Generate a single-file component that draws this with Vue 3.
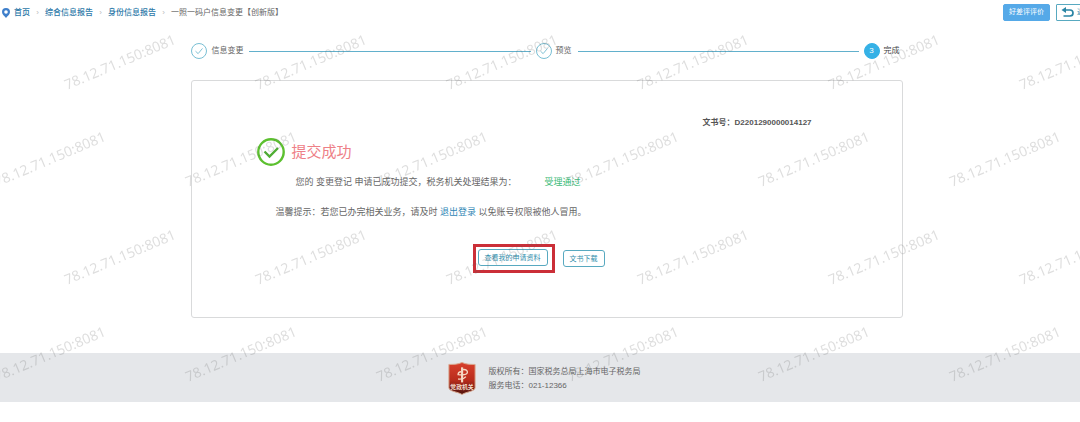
<script setup>
import { ref } from 'vue'

const crumbs = ref(['首页', '综合信息报告', '身份信息报告'])

const steps = ref([
  { title: '信息变更', done: true },
  { title: '预览', done: true },
  { title: '完成', done: false },
])

const watermark = '78.12.71.150:8081'
</script>

<template>
  <div class="page">
    <header class="topbar">
      <nav class="crumbs">
        <svg class="pin" viewBox="0 0 16 20">
          <path d="M8 0a8 8 0 0 0-8 8c0 5 5 8 8 12 3-4 8-7 8-12a8 8 0 0 0-8-8z" fill="#3f7fcb" />
          <circle cx="8" cy="8" r="3.6" fill="#fff" />
        </svg>
        <template v-for="item in crumbs" :key="item">
          <a href="#">{{ item }}</a>
          <span class="sep">›</span>
        </template>
        <span class="current">一照一码户信息变更【创新版】</span>
      </nav>
      <div class="tools">
        <button type="button" class="rate">好差评评价</button>
        <button type="button" class="back">
          <svg viewBox="0 0 28 22">
            <path d="M9 6h9a6 6 0 0 1 0 12H5" fill="none" stroke="#2b85a5" stroke-width="3.4" />
            <path d="M10 0v12L1 6z" fill="#2b85a5" />
          </svg>
          <span>返回</span>
        </button>
      </div>
    </header>

    <main class="main">
      <ol class="steps">
        <li v-for="(step, i) in steps" :key="step.title" :class="{ active: !step.done }">
          <span class="dot">
            <svg v-if="step.done" viewBox="0 0 16 16">
              <path d="M4 8.2l3 2.8 5-6" fill="none" stroke="#6fb9cf" stroke-width="1" />
            </svg>
            <template v-else>{{ i + 1 }}</template>
          </span>
          <span>{{ step.title }}</span>
          <i v-if="i < steps.length - 1" class="line" />
        </li>
      </ol>

      <section class="card">
        <p class="doc-no">文书号：D2201290000014127</p>
        <div class="result">
          <svg class="ok" viewBox="0 0 28 28">
            <circle cx="14" cy="14" r="12.7" fill="#fff" stroke="#5cc02f" stroke-width="2.4" />
            <path d="M7.5 13.5l5 5 8.5-8.5" fill="none" stroke="#4fae33" stroke-width="2.4" />
          </svg>
          <h1>提交成功</h1>
        </div>
        <p class="status">
          <span>您的 变更登记 申请已成功提交，税务机关处理结果为：</span>
          <span class="pass">受理通过</span>
        </p>
        <p class="tip">温馨提示：若您已办完相关业务，请及时 <a href="#">退出登录</a> 以免账号权限被他人冒用。</p>
        <div class="actions">
          <span class="highlight">
            <button type="button">查看我的申请资料</button>
          </span>
          <button type="button">文书下载</button>
        </div>
      </section>
    </main>

    <footer class="footer">
      <svg class="badge" viewBox="0 0 28 34">
        <defs>
          <linearGradient id="shield" x1="0" y1="0" x2="0" y2="1">
            <stop offset="0" stop-color="#d8402c" />
            <stop offset="0.55" stop-color="#b92c1c" />
            <stop offset="1" stop-color="#4e120c" />
          </linearGradient>
        </defs>
        <path d="M14 .5c4 2 9 2 13.500 2v24c0 4-9 4-13.500 7C9.500 30.500.5 30.500.5 26.500v-24c4.500 0 9.500 0 13.500-2z" fill="url(#shield)" stroke="#d9a88f" stroke-width="1" />
        <path d="M13 5.500h2.200V21H13z" fill="#f6d9c4" />
        <path d="M14 8c4-1 6 1 5.500 3-.5 2-5 2.500-9.500 2 0-2 1.500-3 3-3M10 17.500c3 .5 6 0 8-2.500" fill="none" stroke="#f6d9c4" stroke-width="1.400" />
        <text x="14" y="27.500" text-anchor="middle" font-size="6" font-weight="700" fill="#f3dccb">党政机关</text>
      </svg>
      <div class="copyright">
        <p>版权所有：国家税务总局上海市电子税务局</p>
        <p>服务电话：021-12366</p>
      </div>
    </footer>

    <svg class="watermark" aria-hidden="true">
      <defs>
        <pattern id="mark" x="-7" y="12" width="191" height="195" patternUnits="userSpaceOnUse">
          <text transform="translate(74 78) rotate(-23)">{{ watermark }}</text>
          <text transform="translate(4 175) rotate(-23)">{{ watermark }}</text>
        </pattern>
      </defs>
      <rect width="100%" height="100%" fill="url(#mark)" />
    </svg>
  </div>
</template>

<style>
body {
  overflow-x: hidden;
  background: #fff;
}
</style>

<style scoped>
.page {
  position: relative;
  width: calc(100% + 14px);
  min-height: 100vh;
  overflow: hidden;
  color: #666;
  font-family: "Liberation Sans", "Noto Sans CJK SC", sans-serif;
  font-size: 8px;
  line-height: 16px;
}
p,
h1,
ol {
  margin: 0;
  padding: 0;
}
a {
  color: #2f86b5;
  text-decoration: none;
}
button {
  box-sizing: border-box;
  height: 17px;
  padding: 0 6px;
  border: 1px solid #58a9c0;
  border-radius: 3px;
  background: #fff;
  color: #2f8dab;
  font-family: inherit;
  font-size: 7px;
  line-height: 14px;
  white-space: nowrap;
}
.topbar {
  display: flex;
  align-items: center;
  justify-content: space-between;
  height: 24px;
}
.crumbs {
  display: flex;
  align-items: center;
  padding: 1px 0 0 2px;
}
.crumbs a {
  color: #2b78a8;
  font-weight: 500;
}
.pin {
  width: 8px;
  height: 10px;
  margin-right: 4px;
}
.sep {
  width: 15px;
  color: #bbb;
  text-align: center;
}
.tools {
  display: flex;
  gap: 6px;
}
.tools .rate {
  padding: 0 5px;
  border-color: #55a9e8;
  border-radius: 2px;
  background: #55a9e8;
  color: #fff;
}
.tools .back {
  display: flex;
  align-items: center;
  gap: 2px;
  padding: 0 2px 0 4px;
  border-radius: 1px;
}
.back svg {
  width: 14px;
  height: 11px;
}
.main {
  width: 65%;
  margin: 0 auto;
}
.steps {
  display: flex;
  padding: 19px 3px 0 0;
  list-style: none;
}
.steps li {
  display: flex;
  flex: 1 1 auto;
  align-items: center;
  gap: 4px;
}
.steps .active {
  flex: none;
  color: #444;
}
.dot {
  box-sizing: border-box;
  width: 16px;
  height: 16px;
  border: 1px solid #79bfd4;
  border-radius: 50%;
  line-height: 14px;
  text-align: center;
}
.dot svg {
  display: block;
}
.active .dot {
  border-color: #35b1e6;
  background: #35b1e6;
  color: #fff;
}
.line {
  flex: 1;
  height: 1px;
  margin: 0 5px 0 2px;
  background: #62b0cc;
}
.card {
  box-sizing: border-box;
  margin-top: 21px;
  padding: 34px 90px 44px 65px;
  border: 1px solid #d9dadb;
  border-radius: 3px;
}
.doc-no {
  color: #555;
  font-weight: 700;
  text-align: right;
}
.result {
  display: flex;
  align-items: center;
  gap: 6px;
  margin-top: 7px;
}
.ok {
  width: 28px;
  height: 28px;
}
h1 {
  color: #ee8087;
  font-size: 15px;
  font-weight: 400;
  line-height: 28px;
}
.status,
.tip {
  font-size: 9px;
  line-height: 30px;
}
.status {
  display: flex;
  gap: 28px;
  margin-top: 1px;
  padding-left: 38px;
}
.pass {
  color: #3dbb78;
}
.tip {
  padding-left: 18px;
}
.actions {
  display: flex;
  align-items: center;
  justify-content: center;
  gap: 8px;
  margin-top: 17px;
  padding-left: 8px;
}
.highlight {
  display: flex;
  padding: 2px 4px 4px 2px;
  border: 3px solid #cb2f38;
}
.footer {
  display: flex;
  align-items: center;
  justify-content: center;
  gap: 13px;
  margin-top: 35px;
  padding: 9px 6px 7px 0;
  background: #e5e7ea;
  line-height: 14px;
}
.badge {
  width: 28px;
  height: 33px;
}
.watermark {
  position: absolute;
  inset: 0;
  width: 100%;
  height: 100%;
  pointer-events: none;
}
.watermark text {
  fill: rgba(90, 90, 90, 0.2);
  font-family: "Noto Sans", sans-serif;
  font-size: 14px;
}
</style>
